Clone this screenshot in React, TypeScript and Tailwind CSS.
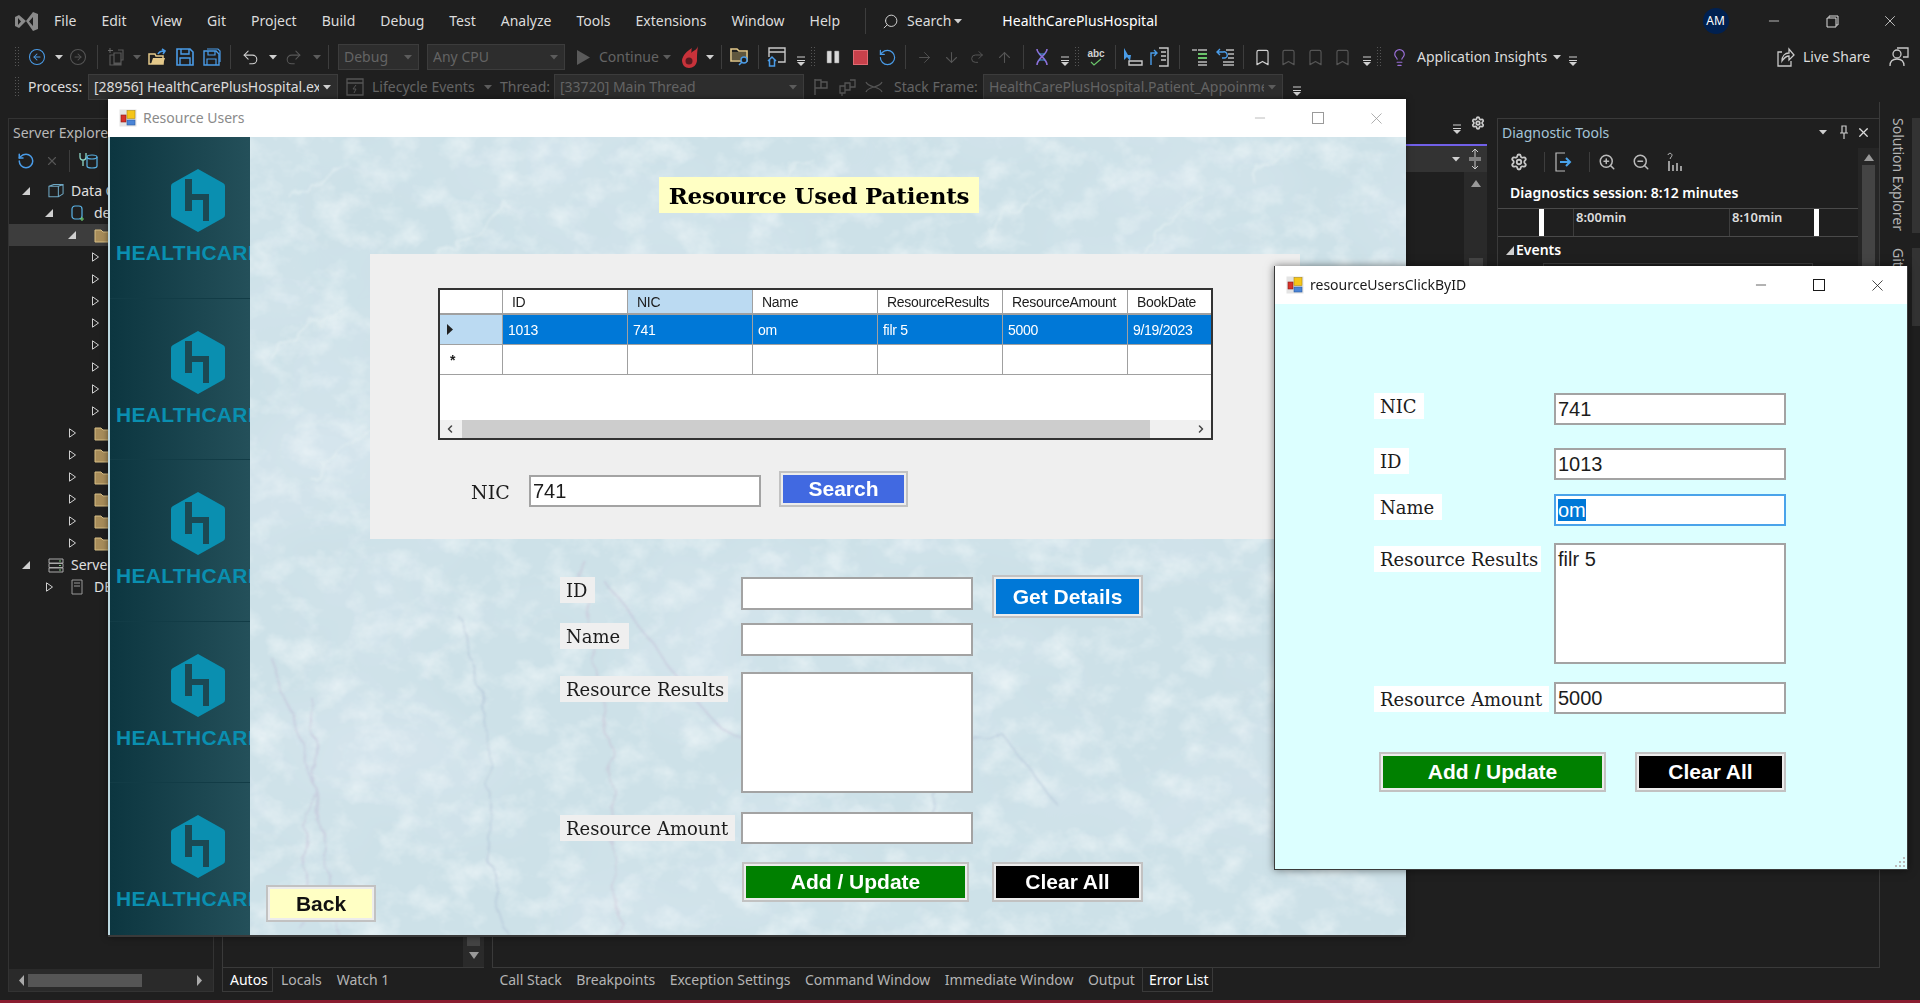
import type { ReactNode } from 'react'
import {
  ArrowDown, ArrowRight, ArrowUp, Bookmark, ChevronLeft, ChevronRight, CircleArrowLeft, CircleArrowRight,
  Lightbulb, Minus, Redo2, RotateCw, Search, Settings, Undo2, X, ZoomIn, ZoomOut,
} from 'lucide-react'

const SERIF = "font-['DejaVu_Serif',serif]"
const ARIAL = "font-['Liberation_Sans',sans-serif]"

function Slot({ className = '', children }: { className?: string; children?: ReactNode }) {
  return <span className={'flex h-5 w-5 shrink-0 items-center justify-center ' + className}>{children}</span>
}

function Sep({ className = '' }: { className?: string }) {
  return (
    <Slot className={className}>
      <span className="h-[24px] w-px bg-[#3d3d3d]" />
    </Slot>
  )
}

function Grip({ className = '' }: { className?: string }) {
  return (
    <Slot className={className}>
      <span className="h-[22px] w-[6px] bg-[radial-gradient(circle,#555_1px,transparent_1px)] bg-[length:3px_3px]" />
    </Slot>
  )
}

function Caret({ className = '', dim = false }: { className?: string; dim?: boolean }) {
  return (
    <Slot className={className}>
      <svg width="9" height="5" viewBox="0 0 9 5">
        <path d="M0 0h8L4 4.5z" fill={dim ? '#5c5c5c' : '#d0d0d0'} />
      </svg>
    </Slot>
  )
}

function Overflow({ className = '' }: { className?: string }) {
  return (
    <Slot className={className}>
      <svg width="9" height="12" viewBox="0 0 9 12" className="mt-2">
        <path d="M0 2h8M0 5.5h8" stroke="#d0d0d0" strokeWidth="1" />
        <path d="M0 7h8L4 11z" fill="#d0d0d0" />
      </svg>
    </Slot>
  )
}

function Combo({ className, children, dim = true }: { className: string; children: ReactNode; dim?: boolean }) {
  return (
    <div className={'flex h-[26px] shrink-0 items-center justify-between overflow-hidden border border-[#3c3c3c] bg-[#2d2d2d] pl-[5px] pr-[2px] whitespace-nowrap ' + (dim ? 'text-[#646464] ' : 'text-[#dcdcdc] ') + className}>
      <span className="min-w-0 overflow-hidden">{children}</span>
      <Caret dim={dim} className="-mx-[2px]" />
    </div>
  )
}

function AppIcon() {
  return (
    <svg width="18" height="18" viewBox="0 0 18 18" className="shrink-0">
      <rect x="0.5" y="0.5" width="17" height="17" fill="#e4e4e4" />
      <rect x="8" y="1.5" width="8" height="8" fill="#f5c518" stroke="#b08a10" strokeWidth=".6" />
      <rect x="2" y="6" width="5" height="7" fill="#d8322a" stroke="#8b1a14" strokeWidth=".6" />
      <rect x="8" y="11" width="8" height="5" fill="#4a84d6" stroke="#2a5aa0" strokeWidth=".6" />
    </svg>
  )
}

function TitleBar({ title, active }: { title: string; active: boolean }) {
  const c = active ? '#1a1a1a' : '#9a9a9a'
  return (
    <div className="flex h-[38px] shrink-0 items-center bg-white pl-[11px]">
      <AppIcon />
      <span className={'ml-[6px] text-[14px] ' + (active ? 'text-[#1a1a1a]' : 'text-[#8a8a8a]')}>{title}</span>
      <span className="ml-auto flex"><Minus size={16} color={c} strokeWidth={1} /></span>
      <span className={'ml-[44px] h-[12px] w-[12px] border ' + (active ? 'border-[#1a1a1a]' : 'border-[#9a9a9a]')} />
      <span className="ml-[43px] mr-[20px] flex"><X size={19} color={c} strokeWidth={1} /></span>
    </div>
  )
}

function Marble() {
  return (
    <svg className="absolute inset-0 h-full w-full" aria-hidden="true">
      <defs>
        <filter id="blotch" x="0" y="0" width="100%" height="100%">
          <feTurbulence type="fractalNoise" baseFrequency="0.005 0.007" numOctaves="3" seed="4" />
          <feColorMatrix values="0 0 0 0 .70  0 0 0 0 .80  0 0 0 0 .87  0 1.3 0 0 -.56" />
        </filter>
        <filter id="fine" x="0" y="0" width="100%" height="100%">
          <feTurbulence type="fractalNoise" baseFrequency="0.03 0.036" numOctaves="4" seed="21" />
          <feColorMatrix values="0 0 0 0 .90  0 0 0 0 .95  0 0 0 0 .96  1.3 0 0 0 -.58" />
        </filter>
        <filter id="wobble" x="-10%" y="-10%" width="120%" height="120%">
          <feTurbulence type="fractalNoise" baseFrequency="0.03" numOctaves="3" seed="7" />
          <feDisplacementMap in="SourceGraphic" scale="26" />
          <feGaussianBlur stdDeviation="1" />
        </filter>
      </defs>
      <rect width="100%" height="100%" fill="#cde1e8" />
      <rect width="100%" height="100%" filter="url(#blotch)" />
      <rect width="100%" height="100%" filter="url(#fine)" />
      <g fill="none" strokeLinecap="round" filter="url(#wobble)">
        <path d="M20 520 C50 600 80 680 85 800 M60 560 C70 620 60 680 50 790 M360 450 C400 500 430 550 470 590 C520 620 590 640 640 620" stroke="#b9a6cb" strokeWidth="1.8" opacity=".32" />
        <path d="M210 480 C225 540 250 600 240 680 C235 730 250 770 260 800 M670 700 C690 640 720 620 745 590 C765 610 790 650 810 670" stroke="#a0b1cc" strokeWidth="1.6" opacity=".38" />
        <path d="M330 420 C350 560 370 640 365 800" stroke="#c4a8c8" strokeWidth="1.8" opacity=".3" />
        <path d="M40 60 L90 30 M190 120 L260 70 M500 70 L560 20 M730 110 L790 50 M880 130 L950 60 M1000 40 L1040 10 M20 220 L90 170 M60 340 L130 290" stroke="#e6f1f3" strokeWidth="3" opacity=".55" />
      </g>
    </svg>
  )
}

function Logo() {
  return (
    <div className="h-[161.5px] shrink-0 border-b border-[#123c46] pt-[32px]">
      <svg width="54" height="63" viewBox="0 0 54 63" className="ml-[61px]">
        <path d="M27 0 L52 14 Q54 15 54 17 V46 Q54 48 52 49 L27 63 L2 49 Q0 48 0 46 V17 Q0 15 2 14 Z" fill="#0a8fb0" />
        <path d="M14 10 H21 V25 H38 V52 H32 V31 H21 V42 H14 Z" fill="#1b4954" />
      </svg>
      <div className={'mt-[9px] pl-[6px] text-[21px] font-bold leading-[24px] tracking-[0.3px] whitespace-nowrap text-[#0a8fb0] ' + ARIAL}>HEALTHCARE</div>
    </div>
  )
}

function Label({ className, children }: { className: string; children: ReactNode }) {
  return <div className={'flex h-[26px] items-center pl-[6px] pt-[1px] text-[18px] whitespace-nowrap text-[#1c1c1c] ' + SERIF + ' ' + className}>{children}</div>
}

function Field({ className = '', children }: { className?: string; children?: ReactNode }) {
  return <div className={'w-[232px] shrink-0 border-2 border-[#a3a3a3] bg-white pl-[2px] text-[20px] leading-[29px] text-[#1c1c1c] ' + ARIAL + ' ' + className}>{children}</div>
}

function Btn({ className, children }: { className: string; children: ReactNode }) {
  return <div className={'flex shrink-0 items-center justify-center border-2 border-[#c2c2c2] text-[21px] font-bold shadow-[inset_0_0_0_2px_#ececec] ' + ARIAL + ' ' + className}>{children}</div>
}

function Cell({ className = '', children }: { className?: string; children?: ReactNode }) {
  return <div className={'flex items-center overflow-hidden border-r border-b border-[#a0a0a0] pl-[5px] whitespace-nowrap ' + className}>{children}</div>
}

function DataGrid() {
  const heads = ['ID', 'NIC', 'Name', 'ResourceResults', 'ResourceAmount', 'BookDate']
  const row = ['1013', '741', 'om', 'filr 5', '5000', '9/19/2023']
  return (
    <div className={"ml-[68px] flex h-[152px] w-[775px] flex-col overflow-hidden border-2 border-[#333] bg-white text-[14px] tracking-[-0.3px] text-[#1c1c1c] " + ARIAL}>
      <div className="grid grid-cols-[63px_125px_125px_125px_125px_125px_84px] grid-rows-[25px_30px_30px]">
        <Cell className="!border-b-2" />
        {heads.map((h) => (
          <Cell key={h} className={'!border-b-2 pl-[9px] ' + (h === 'NIC' ? 'bg-[#bbdaf2]' : '')}>{h}</Cell>
        ))}
        <Cell className="bg-[#bbdaf2] pl-[7px]">
          <svg width="7" height="11" viewBox="0 0 7 11"><path d="M0 0l6 5.5L0 11z" fill="#222" /></svg>
        </Cell>
        {row.map((v) => (
          <Cell key={v} className="bg-[#0078d7] text-white">{v}</Cell>
        ))}
        <Cell className="pl-[10px] text-[14px] font-bold">*</Cell>
        {heads.map((h) => (
          <Cell key={h} />
        ))}
      </div>
      <div className="flex-1" />
      <div className="flex h-[18px] items-center bg-[#f0f0f0]">
        <ChevronLeft size={12} color="#444" strokeWidth={3} className="ml-[4px]" />
        <div className="ml-[6px] h-full w-[688px] bg-[#cdcdcd]" />
        <ChevronRight size={12} color="#444" strokeWidth={3} className="ml-auto mr-[4px]" />
      </div>
    </div>
  )
}

function MainWindow() {
  return (
    <div className="absolute left-[108px] top-[99px] flex h-[838px] w-[1298px] flex-col border-b-2 border-[#3a3a3a] bg-white shadow-[0_0_6px_rgba(0,0,0,.5)]">
      <TitleBar title="Resource Users" active={false} />
      <div className="flex min-h-0 flex-1 border-l-2 border-[#bcd8e0]">
        <div className="w-[140px] shrink-0 overflow-hidden bg-gradient-to-r from-[#0c3640] to-[#24505a]">
          <Logo /><Logo /><Logo /><Logo /><Logo />
        </div>
        <div className="relative flex-1 overflow-hidden">
          <Marble />
          <div className="relative">
            <div className={'ml-[409px] mt-[40px] flex h-[36px] w-[320px] items-center justify-center bg-[#ffffc4] pt-[2px] text-[23px] font-bold tracking-[-0.2px] text-black ' + SERIF}>Resource Used Patients</div>
            <div className="ml-[120px] mt-[41px] h-[285px] w-[930px] bg-[#efefef] pt-[34px]">
              <DataGrid />
              <div className="ml-[101px] mt-[35px] flex">
                <div className={'mt-[7px] w-[58px] text-[19px] text-[#1c1c1c] ' + SERIF}>NIC</div>
                <Field className="h-[32px]">741</Field>
                <Btn className="ml-[18px] -mt-[4px] h-[36px] w-[129px] bg-[#4169e1] text-white">Search</Btn>
              </div>
            </div>
            <div className="pl-[310px] pt-[38px]">
              <div className="flex h-[33px]">
                <Label className="w-[35px] bg-[#efefef]">ID</Label>
                <Field className="ml-[146px] h-[33px]" />
                <Btn className="ml-[19px] -mt-[2px] h-[43px] w-[151px] bg-[#0078d7] text-white">Get Details</Btn>
              </div>
              <div className="mt-[13px] flex h-[33px]">
                <Label className="w-[69px] bg-[#efefef]">Name</Label>
                <Field className="ml-[112px] h-[33px]" />
              </div>
              <div className="mt-[16px] flex h-[121px]">
                <Label className="mt-[4px] w-[168px] bg-[#efefef]">Resource Results</Label>
                <Field className="ml-[13px] h-[121px]" />
              </div>
              <div className="mt-[19px] flex h-[32px]">
                <Label className="mt-[3px] w-[175px] bg-[#efefef]">Resource Amount</Label>
                <Field className="ml-[6px] h-[32px]" />
              </div>
            </div>
            <div className="flex pl-[16px]">
              <Btn className="mt-[41px] h-[37px] w-[110px] bg-[#ffffc4] text-[#111]">Back</Btn>
              <Btn className="ml-[366px] mt-[18px] h-[40px] w-[227px] bg-[#008000] text-white">Add / Update</Btn>
              <Btn className="ml-[23px] mt-[18px] h-[40px] w-[151px] bg-black text-white">Clear All</Btn>
            </div>
          </div>
        </div>
      </div>
    </div>
  )
}

function SecondWindow() {
  return (
    <div className="absolute left-[1274px] top-[266px] flex h-[604px] w-[634px] flex-col border border-[#3a3a3a] border-t-0 bg-white shadow-[0_0_8px_rgba(0,0,0,.5)]">
      <TitleBar title="resourceUsersClickByID" active />
      <div className="relative flex-1 bg-[#dcffff] pl-[99px] pt-[89px]">
        <div className="flex h-[32px]">
          <Label className="w-[50px] bg-white">NIC</Label>
          <Field className="ml-[130px] h-[32px]">741</Field>
        </div>
        <div className="mt-[23px] flex h-[32px]">
          <Label className="w-[35px] bg-white">ID</Label>
          <Field className="ml-[145px] h-[32px]">1013</Field>
        </div>
        <div className="mt-[14px] flex h-[32px]">
          <Label className="w-[68px] bg-white">Name</Label>
          <Field className="ml-[112px] h-[32px] !border-[#4aa3ea]">
            <span className="bg-[#0078d7] text-white">om</span>
          </Field>
        </div>
        <div className="mt-[17px] flex h-[121px]">
          <Label className="mt-[3px] w-[167px] bg-white">Resource Results</Label>
          <Field className="ml-[13px] h-[121px]">filr 5</Field>
        </div>
        <div className="mt-[18px] flex h-[32px]">
          <Label className="mt-[4px] w-[175px] bg-white">Resource Amount</Label>
          <Field className="ml-[5px] h-[32px]">5000</Field>
        </div>
        <div className="mt-[38px] flex pl-[5px]">
          <Btn className="h-[40px] w-[227px] bg-[#008000] text-white">Add / Update</Btn>
          <Btn className="ml-[29px] h-[40px] w-[151px] bg-black text-white">Clear All</Btn>
        </div>
        <svg width="12" height="12" viewBox="0 0 12 12" className="absolute bottom-[1px] right-[1px]">
          <path d="M9 1h2v2H9zM5 5h2v2H5zM9 5h2v2H9zM1 9h2v2H1zM5 9h2v2H5zM9 9h2v2H9z" fill="#bbb" />
        </svg>
      </div>
    </div>
  )
}

function FolderIcon() {
  return (
    <svg width="18" height="15" viewBox="0 0 18 15" className="shrink-0">
      <path d="M1 2h6l2 2h8v10H1z" fill="#a88d5a" stroke="#d8bf85" strokeWidth="1" />
    </svg>
  )
}

function TreeRow({ pad, open, hl, icon, text }: { pad: string; open: boolean; hl?: boolean; icon?: ReactNode; text?: string }) {
  return (
    <div className={'flex h-[22px] items-center whitespace-nowrap ' + pad + (hl ? ' bg-[#3d3d3d]' : '')}>
      <svg width="9" height="10" viewBox="0 0 9 10" className="shrink-0">
        {open
          ? <path d="M8 1v8H0z" fill="#cfcfcf" />
          : <path d="M1.5 .8L7.5 5 1.5 9.2z" fill="none" stroke="#cfcfcf" strokeWidth="1" />}
      </svg>
      {icon && <span className="ml-[17px] flex w-[16px] shrink-0">{icon}</span>}
      {text && <span className="ml-[7px] text-[#e0e0e0]">{text}</span>}
    </div>
  )
}

function ServerExplorer() {
  const L4 = ['a', 'b', 'c', 'd', 'e', 'f', 'g', 'h']
  const L3 = ['a', 'b', 'c', 'd', 'e', 'f']
  return (
    <div className="ml-[8px] mt-[16px] flex h-[874px] w-[206px] shrink-0 flex-col border border-[#333]">
      <div className="flex h-[28px] items-center pl-[4px] text-[#b8b8b8] whitespace-nowrap">Server Explorer</div>
      <div className="flex h-[28px] items-center pl-[8px]">
        <RotateCw size={18} color="#4a9ce8" className="-scale-x-100" />
        <X size={14} color="#555" className="ml-[10px]" />
        <span className="ml-[10px] h-[22px] w-px bg-[#3d3d3d]" />
        <svg width="20" height="18" viewBox="0 0 20 18" className="ml-[8px]">
          <path d="M2 1v4a3 3 0 0 0 6 0V1M5 8v6" fill="none" stroke="#8fd8c8" strokeWidth="1.3" />
          <ellipse cx="14" cy="5" rx="5" ry="2" fill="none" stroke="#5ab4e8" strokeWidth="1.2" />
          <path d="M9 5v9c0 1 2 2 5 2s5-1 5-2V5" fill="none" stroke="#5ab4e8" strokeWidth="1.2" />
        </svg>
      </div>
      <div className="mt-[5px] flex-1 overflow-hidden">
        <TreeRow pad="pl-[13px]" open text="Data Connections" icon={
          <svg width="17" height="16" viewBox="0 0 17 16"><path d="M1 3l5-2h10v10l-5 3H1zM1 3h10v11M11 3l5-2" fill="none" stroke="#6fa8c4" strokeWidth="1.1" /></svg>
        } />
        <TreeRow pad="pl-[36px]" open text="de" icon={
          <svg width="15" height="17" viewBox="0 0 15 17"><rect x="1" y="1" width="10" height="13" rx="3" fill="none" stroke="#5ab4e8" strokeWidth="1.2" /><path d="M11 12v4M9 14h4" stroke="#6ac46a" strokeWidth="1.2" /></svg>
        } />
        <TreeRow pad="pl-[59px]" open hl icon={<FolderIcon />} />
        {L4.map((k) => <TreeRow key={k} pad="pl-[82px]" open={false} />)}
        {L3.map((k) => <TreeRow key={k} pad="pl-[59px]" open={false} icon={<FolderIcon />} />)}
        <TreeRow pad="pl-[13px]" open text="Servers" icon={
          <svg width="16" height="15" viewBox="0 0 16 15"><path d="M1 1h14v4H1zM1 5.5h14v4H1zM1 10h14v4H1z" fill="none" stroke="#aaa" strokeWidth="1" /><path d="M11 3h2M11 7.5h2M11 12h2" stroke="#7bc47b" strokeWidth="1" /></svg>
        } />
        <TreeRow pad="pl-[36px]" open={false} text="DE" icon={
          <svg width="12" height="16" viewBox="0 0 12 16"><path d="M1 1h10v14H1z" fill="none" stroke="#999" strokeWidth="1" /><path d="M3 4h6M3 7h6" stroke="#999" /></svg>
        } />
      </div>
      <div className="flex h-[22px] items-center bg-[#2a2a2a] pl-[10px]">
        <svg width="6" height="11" viewBox="0 0 6 11"><path d="M5 0v11L0 5.500z" fill="#aaa" /></svg>
        <span className="ml-[3px] h-[13px] w-[114px] bg-[#555]" />
        <svg width="6" height="11" viewBox="0 0 6 11" className="ml-[54px]"><path d="M1 0v11l5-5.500z" fill="#aaa" /></svg>
      </div>
    </div>
  )
}

function DiagnosticTools() {
  return (
    <div className="relative mt-[16px] h-[500px] w-[382px] shrink-0 border-l border-t border-[#3a3a3a]">
      <div className="flex h-[27px] items-center pl-[4px] pr-[8px] text-[#a4c4d8]">
        Diagnostic Tools
        <Caret className="ml-auto" />
        <svg width="10" height="15" viewBox="0 0 10 15" className="ml-[6px]"><path d="M3 1h4v7H3zM1 8h8M5 8v6" fill="none" stroke="#ccc" strokeWidth="1.2" /></svg>
        <X size={15} color="#ddd" className="ml-[7px]" />
      </div>
      <div className="flex h-[31px] items-center pl-[12px]">
        <Settings size={18} color="#c8c8c8" strokeWidth={2.4} />
        <span className="ml-[16px] h-[20px] w-px bg-[#3d3d3d]" />
        <svg width="18" height="20" viewBox="0 0 18 20" className="ml-[10px]"><path d="M10 1H1v18h9" fill="none" stroke="#bbb" strokeWidth="1.2" /><path d="M5 10h10M11 6l4 4-4 4" fill="none" stroke="#4aa3ea" strokeWidth="2" /></svg>
        <span className="ml-[16px] h-[20px] w-px bg-[#3d3d3d]" />
        <ZoomIn size={18} color="#bbb" className="ml-[8px]" />
        <ZoomOut size={18} color="#bbb" className="ml-[16px]" />
        <svg width="16" height="20" viewBox="0 0 16 20" className="ml-[16px]"><path d="M3 9v10M7 13v6M11 11v8M15 14v5" stroke="#bbb" strokeWidth="1.6" /><path d="M2 3a2 2 0 1 1 3 2L4 7" fill="none" stroke="#bbb" /></svg>
      </div>
      <div className="flex h-[31px] items-center pl-[12px] text-[14px] font-semibold text-white whitespace-nowrap">Diagnostics session: 8:12 minutes</div>
      <div className="mr-[20px] flex h-[29px] border-y border-[#4a4a4a] pl-[41px] text-[13px] font-semibold text-[#dcdcdc]">
        <span className="w-[5px] bg-white" />
        <span className="ml-[29px] h-full w-[156px] border-l border-[#3d3d3d] pl-[2px] leading-[16px]">8:00min</span>
        <span className="h-full w-[85px] border-l border-[#3d3d3d] pl-[2px] leading-[16px]">8:10min</span>
        <span className="w-[5px] bg-white" />
      </div>
      <div className="flex h-[26px] items-center pl-[8px] text-[14px] font-semibold text-white">
        <svg width="8" height="9" viewBox="0 0 8 9"><path d="M8 0v9H0z" fill="#cfcfcf" /></svg>
        <span className="ml-[2px]">Events</span>
      </div>
      <div className="ml-[45px] h-[60px] w-[270px] border border-[#3d3d3d]" />
      <div className="absolute right-0 top-[29px] flex h-[470px] w-[21px] flex-col items-center bg-[#262626]">
        <svg width="10" height="7" viewBox="0 0 10 7" className="mt-[6px]"><path d="M5 0l5 7H0z" fill="#999" /></svg>
        <span className="mt-[4px] h-[140px] w-[13px] bg-[#444]" />
      </div>
    </div>
  )
}

function Toolbar() {
  return (
    <div className="flex h-[30px] items-center whitespace-nowrap">
      <Grip className="ml-[7px]" />
      <Slot><CircleArrowLeft size={18} color="#4a9ce8" strokeWidth={1.4} /></Slot>
      <Caret className="ml-[2px]" />
      <Slot className="-ml-[1px]"><CircleArrowRight size={18} color="#555" strokeWidth={1.4} /></Slot>
      <Sep className="-ml-[1px]" />
      <Slot>
        <svg width="20" height="20" viewBox="0 0 20 20"><path d="M7 6h7v10H7zM11 3h5v10h-2M3 8h4v9h7v1H3z" fill="none" stroke="#585858" strokeWidth="1.2" /><path d="M3 1v5M1 3.500h5" stroke="#666" /></svg>
      </Slot>
      <Caret dim />
      <Slot className="ml-[1px]">
        <svg width="20" height="18" viewBox="0 0 20 18"><path d="M1 6h6l1 2h7v8H1z" fill="none" stroke="#e4c98a" strokeWidth="1.5" /><path d="M3 16l2-6h12l-2 6z" fill="#e4c98a" /><path d="M10 6c1-2 3-3 6-3M14 1l3 2-2 3" fill="none" stroke="#4a9ce8" strokeWidth="1.6" /></svg>
      </Slot>
      <Slot className="ml-[7px]">
        <svg width="18" height="18" viewBox="0 0 18 18"><path d="M1 1h13l3 3v13H1z" fill="none" stroke="#4a9ce8" strokeWidth="1.6" /><path d="M5 1v5h8V1M4 17v-7h10v7" fill="none" stroke="#4a9ce8" strokeWidth="1.4" /></svg>
      </Slot>
      <Slot className="ml-[7px]">
        <svg width="18" height="18" viewBox="0 0 18 18"><path d="M4 1h11l2 2v11" fill="none" stroke="#4a9ce8" strokeWidth="1.2" /><path d="M1 3h12l3 3v11H1z" fill="none" stroke="#4a9ce8" strokeWidth="1.4" /><path d="M5 3v4h7V3M4 17v-6h9v6" fill="none" stroke="#4a9ce8" strokeWidth="1.2" /></svg>
      </Slot>
      <Sep className="-ml-[2px]" />
      <Slot><Undo2 size={19} color="#cfcfcf" strokeWidth={1.3} /></Slot>
      <Caret className="ml-[3px]" />
      <Slot><Redo2 size={19} color="#585858" strokeWidth={1.3} /></Slot>
      <Caret dim className="ml-[4px]" />
      <Sep className="-ml-[9px]" />
      <Combo className="w-[81px]">Debug</Combo>
      <Combo className="ml-[8px] w-[138px]">Any CPU</Combo>
      <Slot className="ml-[8px]"><svg width="13" height="15" viewBox="0 0 13 15"><path d="M0 0l13 7.500L0 15z" fill="#5a5a5a" /></svg></Slot>
      <span className="ml-[6px] w-[59px] text-[#646464]">Continue</span>
      <Caret dim className="-ml-[1px]" />
      <Slot className="ml-[3px]">
        <svg width="20" height="22" viewBox="0 0 20 22"><path d="M18 0c-1 4-4 4-7 7 1-2 0-3 1-5-5 3-9 7-10 12 0 5 3 8 7 8s8-3 8-8c0-4 0-7 1-14z" fill="#c8323a" /><circle cx="9" cy="15" r="3.500" fill="#5a1a20" /></svg>
      </Slot>
      <Caret />
      <Sep className="-ml-[9px]" />
      <Slot className="-ml-[1px]">
        <svg width="20" height="20" viewBox="0 0 20 20"><path d="M1 2h6l2 2h8v10H1z" fill="none" stroke="#e4c98a" strokeWidth="1.6" /><path d="M2 5h14v8H2z" fill="#d8bc78" opacity=".35" /><circle cx="14" cy="13" r="3" fill="#1f1f1f" stroke="#4a9ce8" strokeWidth="1.4" /><path d="M12 15l-3 3" stroke="#4a9ce8" strokeWidth="1.6" /></svg>
      </Slot>
      <Sep className="-ml-[2px]" />
      <Slot className="-ml-[1px]">
        <svg width="20" height="20" viewBox="0 0 20 20"><path d="M2 10V1h16v14h-7M2 5h16" fill="none" stroke="#c8c8c8" strokeWidth="1.4" /><path d="M1 14l4-4 4 4M2.500 13v6h5v-6" fill="none" stroke="#4a9ce8" strokeWidth="1.5" /></svg>
      </Slot>
      <Overflow className="ml-[4px]" />
      <Grip className="-ml-[8px]" />
      <Slot>
        <svg width="14" height="14" viewBox="0 0 14 14"><rect x="1" y="1" width="4.500" height="12" rx=".5" fill="#d8d8d8" stroke="#888" strokeWidth=".5" /><rect x="8.500" y="1" width="4.500" height="12" rx=".5" fill="#d8d8d8" stroke="#888" strokeWidth=".5" /></svg>
      </Slot>
      <Slot className="ml-[7px]"><span className="h-[13px] w-[13px] bg-[#c8414b] outline outline-1 outline-[#e06a72]" /></Slot>
      <Slot className="ml-[7px]"><RotateCw size={19} color="#4a9ce8" strokeWidth={1.5} className="-scale-x-100" /></Slot>
      <Sep className="-ml-[2px]" />
      <Slot className="-ml-[1px]"><ArrowRight size={17} color="#555" strokeWidth={1.3} /></Slot>
      <Slot className="ml-[7px]"><ArrowDown size={17} color="#555" strokeWidth={1.5} /></Slot>
      <Slot className="ml-[6px]"><Redo2 size={16} color="#555" strokeWidth={1.5} /></Slot>
      <Slot className="ml-[7px]"><ArrowUp size={17} color="#555" strokeWidth={1.5} /></Slot>
      <Sep className="-ml-[1px]" />
      <Slot className="-ml-[1px]">
        <svg width="18" height="18" viewBox="0 0 18 18"><path d="M4 1c0 6 10 9 10 16M14 1C14 7 4 10 4 17" fill="none" stroke="#8a6fd8" strokeWidth="1.6" /><path d="M6 6h6M6 12h6" stroke="#4a9ce8" strokeWidth="1.2" /></svg>
      </Slot>
      <Overflow className="ml-[3px]" />
      <Grip className="-ml-[8px]" />
      <Slot className="-ml-[1px]">
        <span className="flex flex-col items-center leading-[9px]">
          <span className={'text-[10px] font-bold text-[#d0d0d0] ' + ARIAL}>abc</span>
          <svg width="12" height="8" viewBox="0 0 12 8"><path d="M1 4l3 3 7-6" fill="none" stroke="#6ac46a" strokeWidth="1.2" /></svg>
        </span>
      </Slot>
      <Sep className="-ml-[1px]" />
      <Slot className="-ml-[2px]">
        <svg width="20" height="20" viewBox="0 0 20 20"><path d="M1 1v12l3-3 3 4 1-6h-3z" fill="#4a9ce8" /><path d="M6 14h13v4H6z" fill="none" stroke="#c8c8c8" strokeWidth="1.4" /></svg>
      </Slot>
      <Slot className="ml-[7px]">
        <svg width="20" height="20" viewBox="0 0 20 20"><path d="M1 18V6h5M4 3l3 3-3 3" fill="none" stroke="#4a9ce8" strokeWidth="1.4" /><path d="M9 1h9v18H9M11 5h5M11 9h5M11 13h5" fill="none" stroke="#c8c8c8" strokeWidth="1.4" /></svg>
      </Slot>
      <Sep className="-ml-[1px]" />
      <Slot className="ml-[1px]">
        <svg width="18" height="18" viewBox="0 0 18 18"><path d="M1 2h5" stroke="#bbb" strokeWidth="1.4" /><path d="M7 2h9M7 14h9M7 17h9" stroke="#bbb" strokeWidth="1.4" /><path d="M7 6h9M7 10h9" stroke="#6ac46a" strokeWidth="2" /></svg>
      </Slot>
      <Slot className="ml-[5px]">
        <svg width="20" height="20" viewBox="0 0 20 20"><path d="M5 2L2 5l3 3M2 5h6a3 3 0 0 1 2 6H7" fill="none" stroke="#4a9ce8" strokeWidth="1.4" /><path d="M11 3h8M13 7h6M13 11h6M8 15h11M8 18h11" stroke="#bbb" strokeWidth="1.3" /></svg>
      </Slot>
      <Sep className="-ml-[2px]" />
      <Slot className="-ml-[1px]"><Bookmark size={19} color="#d0d0d0" strokeWidth={1.5} /></Slot>
      <Slot className="ml-[6px]"><Bookmark size={19} color="#555" strokeWidth={1.5} /></Slot>
      <Slot className="ml-[7px]"><Bookmark size={19} color="#555" strokeWidth={1.5} /></Slot>
      <Slot className="ml-[7px]"><Bookmark size={19} color="#555" strokeWidth={1.5} /></Slot>
      <Overflow className="ml-[5px]" />
      <Grip className="-ml-[8px]" />
      <Slot><Lightbulb size={19} color="#9a6fd8" strokeWidth={1.5} /></Slot>
      <span className="ml-[8px] w-[130px] text-[#dcdcdc]">Application Insights</span>
      <Caret />
      <Overflow className="-ml-[4px]" />
      <svg width="18" height="20" viewBox="0 0 18 20" className="ml-[194px] shrink-0"><path d="M5 5H1v14h13v-5" fill="none" stroke="#c8c8c8" strokeWidth="1.3" /><path d="M5 14c0-5 3-8 7-8V2l5 6-5 5V9c-3 0-5 2-7 5z" fill="none" stroke="#c8c8c8" strokeWidth="1.3" /></svg>
      <span className="ml-[8px] text-[#dcdcdc]">Live Share</span>
      <svg width="20" height="20" viewBox="0 0 20 20" className="ml-[19px] shrink-0"><circle cx="8" cy="7" r="4" fill="none" stroke="#c8c8c8" strokeWidth="1.3" /><path d="M1 19c0-5 3-7 7-7s7 2 7 7M8 1h11v9h-5" fill="none" stroke="#c8c8c8" strokeWidth="1.3" /></svg>
    </div>
  )
}

function DebugBar() {
  return (
    <div className="flex h-[30px] items-center whitespace-nowrap">
      <Grip className="ml-[7px]" />
      <span className="w-[61px] pl-[1px] text-[#dcdcdc]">Process:</span>
      <Combo dim={false} className="w-[250px]">[28956] HealthCarePlusHospital.ex</Combo>
      <Slot className="ml-[7px]">
        <svg width="18" height="18" viewBox="0 0 18 18"><path d="M1 1h16v16H1zM1 5h16" fill="none" stroke="#555" strokeWidth="1.3" /><path d="M10 7l-3 4h3l-2 4" fill="none" stroke="#555" /></svg>
      </Slot>
      <span className="ml-[7px] w-[103px] text-[#646464]">Lifecycle Events</span>
      <Caret dim className="ml-[3px]" />
      <span className="ml-[2px] w-[54px] text-[#646464]">Thread:</span>
      <Combo className="w-[250px]">[33720] Main Thread</Combo>
      <Slot className="ml-[7px]">
        <svg width="16" height="18" viewBox="0 0 16 18"><path d="M2 1v16M2 2h6v8H2M8 4h6v6H8" fill="none" stroke="#555" strokeWidth="1.4" /></svg>
      </Slot>
      <Slot className="ml-[7px]">
        <svg width="18" height="18" viewBox="0 0 18 18"><path d="M1 8h5v7H1zM6 5h5v7H6zM11 2h5v7h-5M3 15v3" fill="none" stroke="#555" strokeWidth="1.3" /></svg>
      </Slot>
      <Slot className="ml-[6px]">
        <svg width="18" height="12" viewBox="0 0 18 12"><path d="M1 1c2 6 14 4 16 10M1 11C3 5 15 7 17 1" fill="none" stroke="#555" strokeWidth="1.2" /></svg>
      </Slot>
      <span className="w-[99px] pl-[10px] text-[#646464]">Stack Frame:</span>
      <Combo className="w-[300px]">HealthCarePlusHospital.Patient_Appoinme</Combo>
      <Overflow className="ml-[4px]" />
    </div>
  )
}

const MENUS = ['File', 'Edit', 'View', 'Git', 'Project', 'Build', 'Debug', 'Test', 'Analyze', 'Tools', 'Extensions', 'Window', 'Help']

export default function App() {
  return (
    <div className="relative flex h-[1003px] w-[1920px] flex-col overflow-hidden bg-[#1f1f1f] font-['Noto_Sans',sans-serif] text-[14px] leading-[20px]">
      {/* menu bar */}
      <div className="flex h-[42px] shrink-0 items-center whitespace-nowrap text-[#dcdcdc]">
        <svg width="25" height="25" viewBox="0 0 25 25" className="ml-[14px] shrink-0">
          <path d="M1 8l4-2 7 6-7 7-4-2zM12 12l7-9 5 2v15l-5 2zM4 9v7l3-3.500zM19 8l-4 4.500 4 4.500z" fill="#8a8a8a" fillRule="evenodd" />
        </svg>
        <div className="ml-[15px] flex gap-[25px]">
          {MENUS.map((m) => <span key={m}>{m}</span>)}
        </div>
        <span className="ml-[25px] h-[26px] w-px bg-[#3d3d3d]" />
        <Search size={17} color="#cfcfcf" className="ml-[16px] -scale-x-100" strokeWidth={1.4} />
        <span className="ml-[8px]">Search</span>
        <Caret className="-ml-[3px]" />
        <span className="ml-[34px] text-white">HealthCarePlusHospital</span>
        <span className="ml-[545px] flex h-[26px] w-[26px] items-center justify-center rounded-full bg-[#002050] text-[12px] text-white">AM</span>
        <Minus size={16} color="#ddd" strokeWidth={1.2} className="ml-[37px]" />
        <svg width="13" height="13" viewBox="0 0 13 13" className="ml-[44px]"><path d="M3 3V1h9v9h-2M1 3h9v9H1z" fill="none" stroke="#ddd" /></svg>
        <X size={18} color="#ddd" strokeWidth={1.1} className="ml-[42px]" />
      </div>
      <Toolbar />
      <DebugBar />

      {/* dock area */}
      <div className="flex h-[890px] shrink-0">
        <ServerExplorer />
        <div className="ml-[8px] flex w-[1658px] shrink-0 flex-col">
          <div className="flex h-[866px] shrink-0">
            <div className="flex w-[262px] shrink-0 justify-end border-b border-l border-[#3a3a3a]">
              <div className="flex w-[21px] flex-col items-center justify-end bg-[#2a2a2a] pb-[8px]">
                <span className="mb-[6px] h-[10px] w-[13px] bg-[#444]" />
                <svg width="10" height="7" viewBox="0 0 10 7"><path d="M0 0h10L5 7z" fill="#999" /></svg>
              </div>
            </div>
            <div className="ml-[8px] flex flex-1 justify-end border-x border-b border-[#3a3a3a]">
              <div className="flex w-[82px] flex-col">
                <div className="mt-[4px] flex h-[38px] items-center justify-end gap-[9px] pr-[2px]">
                  <Overflow className="!w-[10px]" />
                  <Settings size={14} color="#ccc" strokeWidth={3} className="-mt-[5px]" />
                </div>
                <div className="h-[2px] bg-[#7160e8]" />
                <div className="flex h-[26px] items-center bg-[#333] pl-[46px]">
                  <Caret className="!w-[10px]" />
                  <svg width="14" height="20" viewBox="0 0 14 20" className="ml-[7px]"><path d="M7 0v8M7 12v8M1 9h12M1 11h12M4 3l3-3 3 3M4 17l3 3 3-3" fill="none" stroke="#ccc" /></svg>
                </div>
                <div className="ml-[59px] flex h-[420px] w-[23px] flex-col items-center bg-[#2a2a2a]">
                  <svg width="10" height="7" viewBox="0 0 10 7" className="mt-[8px]"><path d="M5 0l5 7H0z" fill="#999" /></svg>
                  <span className="mt-[71px] h-[60px] w-[14px] bg-[#444]" />
                </div>
              </div>
              <div className="ml-[10px]"><DiagnosticTools /></div>
            </div>
          </div>
          <div className="flex h-[24px] shrink-0 items-center text-[#b4b4b4] whitespace-nowrap">
            <span className="flex h-full w-[51px] items-center border-x border-b border-[#3a3a3a] pl-[7px] text-white">Autos</span>
            <span className="ml-[8px]">Locals</span>
            <span className="ml-[15px]">Watch 1</span>
            <div className="ml-[110px] flex gap-[14.5px]">
              <span>Call Stack</span>
              <span>Breakpoints</span>
              <span>Exception Settings</span>
              <span>Command Window</span>
              <span>Immediate Window</span>
              <span>Output</span>
            </div>
            <span className="ml-[7px] flex h-full w-[71px] items-center border-x border-b border-[#3a3a3a] pl-[6px] text-white">Error List</span>
          </div>
        </div>
        <div className="relative w-[40px] shrink-0 pt-[16px]">
          <div className="absolute right-0 top-[16px] h-[115px] w-[8px] bg-[#333]" />
          <div className="absolute right-0 top-[146px] h-[78px] w-[8px] bg-[#333]" />
          <div className="ml-[8px] flex h-[115px] items-center [writing-mode:vertical-rl] text-[#b4b4b4]">Solution Explorer</div>
          <div className="ml-[8px] mt-[15px] [writing-mode:vertical-rl] text-[#b4b4b4]">Git</div>
        </div>
      </div>
      <div className="flex-1" />
      <div className="h-[3px] shrink-0 bg-[#8a1c30]" />

      <MainWindow />
      <SecondWindow />
    </div>
  )
}
